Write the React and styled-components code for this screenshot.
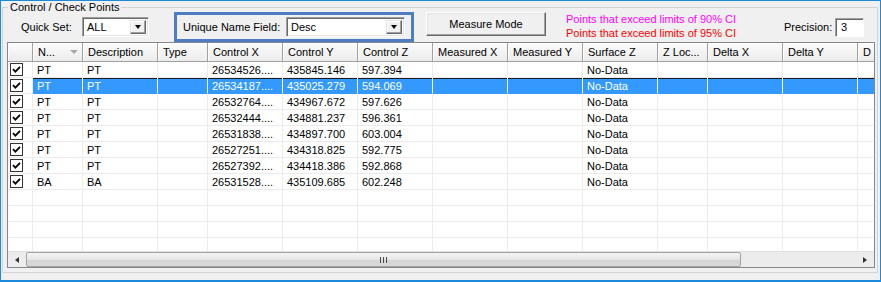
import styled, {createGlobalStyle} from "styled-components";

const GlobalStyle = createGlobalStyle`
  html, body {
    margin: 0;
    padding: 0;
    background: #f0f0f0;
  }
  * {
    box-sizing: border-box;
  }
`;

const Window = styled.div`
  width: 881px;
  height: 282px;
  background: #f0f0f0;
  border: 1px solid #1c8ad9;
  border-bottom-width: 2px;
  padding: 0 2px 0 1px;
  font-family: "Liberation Sans", Arial, sans-serif;
  font-size: 11px;
  color: #000;
  overflow: hidden;
`;

const GroupBox = styled.fieldset`
  margin: 0;
  padding: 0 2px 4px 4px;
  border: 1px solid #d3d3d3;
  min-width: 0;
`;

const GroupTitle = styled.legend`
  margin-left: 1px;
  padding: 0 2px;
  line-height: 13px;
  font-size: 11px;
`;

const Toolbar = styled.div`
  display: flex;
  align-items: center;
  height: 30px;
  margin-top: -2px;
`;

const Label = styled.span`
  display: inline-block;
  width: ${p => p.$w}px;
  margin-left: ${p => p.$ml || 0}px;
  white-space: nowrap;
`;

const Combo = styled.div`
  display: flex;
  align-items: stretch;
  width: ${p => p.$w}px;
  height: 20px;
  background: #fff;
  border: 1px solid;
  border-color: #a0a0a0 #fff #fff #a0a0a0;
  box-shadow: inset 1px 1px #696969, inset -1px -1px #e3e3e3;
  padding: 2px;
`;

const ComboText = styled.span`
  flex: 1;
  padding-left: 2px;
  line-height: 14px;
`;

const DropButton = styled.span`
  width: 16px;
  display: flex;
  align-items: center;
  justify-content: center;
  background: #f0f0f0;
  border: 1px solid;
  border-color: #e3e3e3 #696969 #696969 #e3e3e3;
  box-shadow: inset -1px -1px #a0a0a0, inset 1px 1px #fff;
`;

const Arrow = styled.span`
  width: 0;
  height: 0;
  border-left: 3.5px solid transparent;
  border-right: 3.5px solid transparent;
  border-top: 4px solid #000;
`;

const Highlight = styled.div`
  display: flex;
  align-items: center;
  width: 240px;
  height: 30px;
  margin-left: 25px;
  border: 3px solid #4d7cc3;
  padding-left: 6px;
`;

const Button = styled.div`
  align-self: flex-start;
  width: 120px;
  height: 24px;
  margin-left: 12px;
  display: flex;
  align-items: center;
  justify-content: center;
  background: #f0f0f0;
  border: 1px solid;
  border-color: #fff #696969 #696969 #fff;
  box-shadow: inset -1px -1px #a0a0a0, inset 1px 1px #e3e3e3;
`;

const Legend = styled.div`
  align-self: flex-start;
  width: 218px;
  margin-left: 20px;
  line-height: 14px;
`;

const LegendLine = styled.div`
  color: ${p => p.$color};
  white-space: nowrap;
`;

const TextBox = styled.div`
  width: 29px;
  height: 19px;
  background: #fff;
  border: 1px solid;
  border-color: #a0a0a0 #fff #fff #a0a0a0;
  box-shadow: inset 1px 1px #696969;
  padding: 2px 0 0 5px;
  line-height: 13px;
`;

const Grid = styled.div`
  border: 1px solid #828790;
  background: #fff;
  overflow: hidden;
`;

const HeadRow = styled.div`
  display: flex;
  height: 19px;
`;

const HeadCell = styled.div`
  flex: 0 0 ${p => p.$w}px;
  display: flex;
  align-items: center;
  padding-left: 5px;
  background: linear-gradient(#fbfbfb, #ececec);
  border-right: 1px solid #a0a0a0;
  border-bottom: 1px solid #a0a0a0;
  box-shadow: inset 1px 1px #fff;
  white-space: nowrap;
  overflow: hidden;
`;

const SortMark = styled.span`
  margin-left: 15px;
  width: 0;
  height: 0;
  border-left: 4px solid transparent;
  border-right: 4px solid transparent;
  border-top: 4px solid #a8a8a8;
`;

const Body = styled.div`
  height: 189px;
  overflow: hidden;
`;

const Row = styled.div`
  display: flex;
  height: 16px;
`;

const Cell = styled.div`
  flex: 0 0 ${p => p.$w}px;
  height: 16px;
  display: flex;
  align-items: center;
  padding-left: 4px;
  border-right: 1px solid ${p => (p.$sel ? "#fff" : "#ececec")};
  border-bottom: 1px solid ${p => (p.$sel ? "#3399ff" : "#ececec")};
  background: ${p => (p.$sel ? "#3399ff" : "#fff")};
  color: ${p => (p.$sel ? "#fff" : "#000")};
  box-shadow: ${p => (p.$sel ? "inset 0 1px #1b1b1b" : "none")};
  white-space: nowrap;
  overflow: hidden;
`;

const CheckCell = styled(Cell)`
  padding-left: 2px;
`;

const CheckBox = styled.span`
  width: 13px;
  height: 13px;
  border: 1px solid #333;
  background: #fff;
  display: flex;
  align-items: center;
  justify-content: center;
`;

const ScrollBar = styled.div`
  display: flex;
  height: 16px;
  background: #ececec;
  border-top: 1px solid #e0e0e0;
`;

const ScrollArrow = styled.div`
  width: ${p => p.$w}px;
  display: flex;
  align-items: center;
  justify-content: center;
`;

const ArrowTri = styled.span`
  width: 0;
  height: 0;
  border-top: 3.5px solid transparent;
  border-bottom: 3.5px solid transparent;
  ${p => (p.$dir === "left" ? "border-right: 4px solid #333;" : "border-left: 4px solid #333;")}
`;

const Thumb = styled.div`
  width: 715px;
  display: flex;
  align-items: center;
  justify-content: center;
  border: 1px solid #a2a2a2;
  border-radius: 2px;
  background: linear-gradient(#f4f4f4 0%, #e6e6e6 50%, #d4d4d4 51%, #dadada 100%);
`;

const Grip = styled.span`
  display: flex;
  gap: 2px;
  & i {
    display: block;
    width: 1px;
    height: 6px;
    background: #4a4a4a;
  }
`;

const columns = [
  {key: "chk", w: 25, label: ""},
  {key: "n", w: 50, label: "N...", sort: true},
  {key: "desc", w: 75, label: "Description"},
  {key: "type", w: 50, label: "Type"},
  {key: "cx", w: 75, label: "Control X"},
  {key: "cy", w: 75, label: "Control Y"},
  {key: "cz", w: 75, label: "Control Z"},
  {key: "mx", w: 75, label: "Measured X"},
  {key: "my", w: 75, label: "Measured Y"},
  {key: "sz", w: 75, label: "Surface Z"},
  {key: "zl", w: 50, label: "Z Loc..."},
  {key: "dx", w: 75, label: "Delta X"},
  {key: "dy", w: 75, label: "Delta Y"},
  {key: "dz", w: 75, label: "D"},
];

const points = [
  ["PT", "26534526....", "435845.146", "597.394"],
  ["PT", "26534187....", "435025.279", "594.069"],
  ["PT", "26532764....", "434967.672", "597.626"],
  ["PT", "26532444....", "434881.237", "596.361"],
  ["PT", "26531838....", "434897.700", "603.004"],
  ["PT", "26527251....", "434318.825", "592.775"],
  ["PT", "26527392....", "434418.386", "592.868"],
  ["BA", "26531528....", "435109.685", "602.248"],
];

const rows = points.map(([n, cx, cy, cz]) => ({
  n, desc: n, type: "", cx, cy, cz, mx: "", my: "", sz: "No-Data", zl: "", dx: "", dy: "", dz: "",
}));

const SELECTED = 1;
const TOTAL_ROWS = 12;

function Check() {
  return (
    <CheckBox>
      <svg width="9" height="9" viewBox="0 0 9 9">
        <path d="M1 4.2 L3.4 6.6 L8 1.8" fill="none" stroke="#000" strokeWidth="1.8"/>
      </svg>
    </CheckBox>
  );
}

function ComboBox({width, value}) {
  return (
    <Combo $w={width}>
      <ComboText>{value}</ComboText>
      <DropButton><Arrow/></DropButton>
    </Combo>
  );
}

export default function App() {
  const allRows = Array.from({length: TOTAL_ROWS}, (_, i) => rows[i] || null);

  return (
    <Window>
      <GlobalStyle/>
      <GroupBox>
        <GroupTitle>Control / Check Points</GroupTitle>
        <Toolbar>
          <Label $w={61} $ml={14}>Quick Set:</Label>
          <ComboBox width={67} value="ALL"/>
          <Highlight>
            <Label $w={103}>Unique Name Field:</Label>
            <ComboBox width={119} value="Desc"/>
          </Highlight>
          <Button>Measure Mode</Button>
          <Legend>
            <LegendLine $color="#ff00ff">Points that exceed limits of 90% CI</LegendLine>
            <LegendLine $color="#ff0000">Points that exceed limits of 95% CI</LegendLine>
          </Legend>
          <Label $w={51}>Precision:</Label>
          <TextBox>3</TextBox>
        </Toolbar>
        <Grid>
          <HeadRow>
            {columns.map(c => (
              <HeadCell key={c.key} $w={c.w}>
                {c.label}
                {c.sort && <SortMark/>}
              </HeadCell>
            ))}
          </HeadRow>
          <Body>
            {allRows.map((row, i) => (
              <Row key={i}>
                {columns.map(c => {
                  if (c.key === "chk") {
                    return <CheckCell key={c.key} $w={c.w}>{row && <Check/>}</CheckCell>;
                  }
                  return (
                    <Cell key={c.key} $w={c.w} $sel={i === SELECTED}>
                      {row ? row[c.key] : ""}
                    </Cell>
                  );
                })}
              </Row>
            ))}
          </Body>
          <ScrollBar>
            <ScrollArrow $w={18}><ArrowTri $dir="left"/></ScrollArrow>
            <Thumb><Grip><i/><i/><i/></Grip></Thumb>
            <div style={{flex: 1}}/>
            <ScrollArrow $w={18}><ArrowTri $dir="right"/></ScrollArrow>
          </ScrollBar>
        </Grid>
      </GroupBox>
    </Window>
  );
}
